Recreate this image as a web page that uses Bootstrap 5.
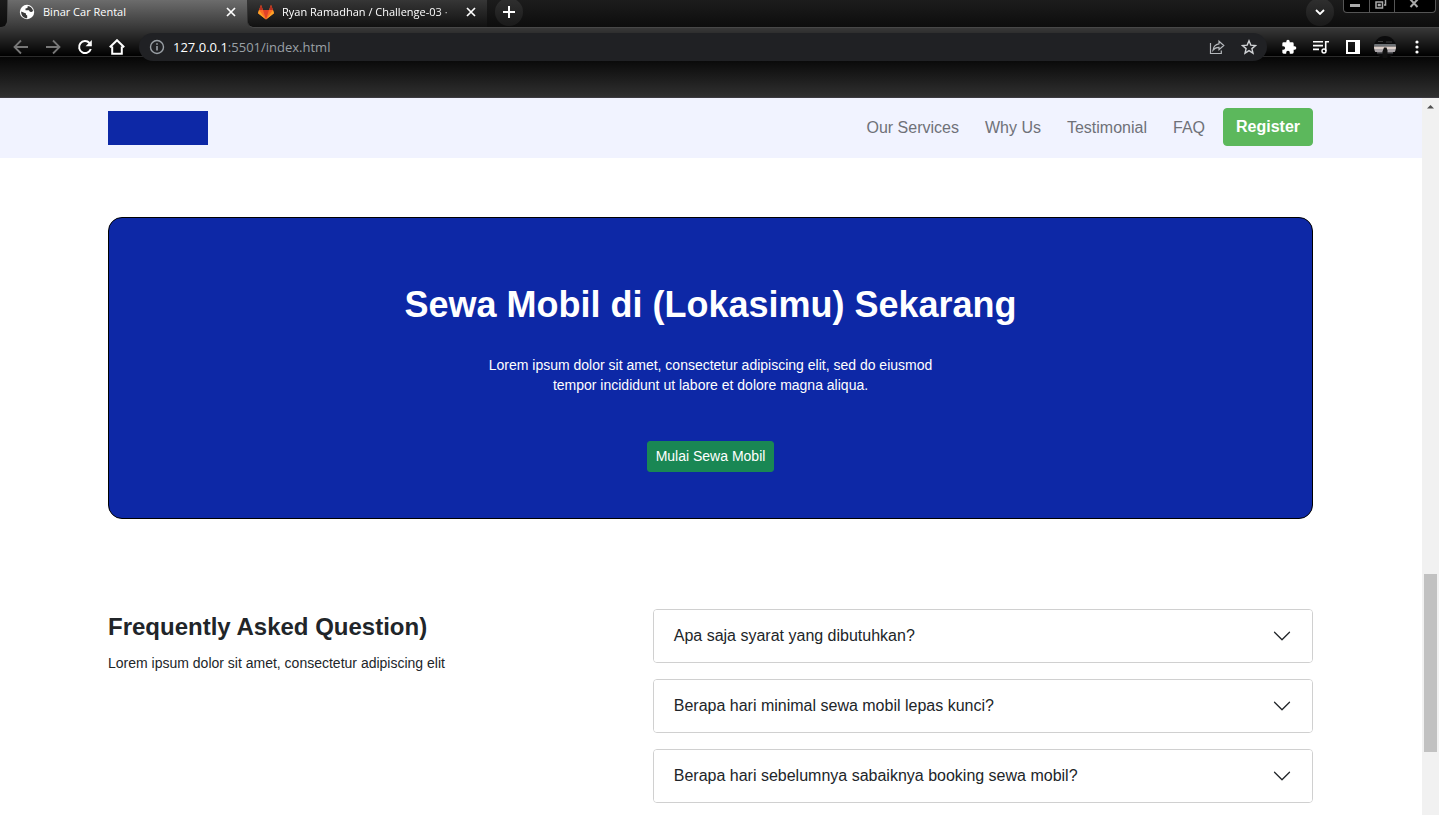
<!DOCTYPE html>
<html lang="id">
<head>
<meta charset="utf-8">
<meta name="viewport" content="width=device-width, initial-scale=1">
<title>Binar Car Rental</title>
<link href="https://cdn.jsdelivr.net/npm/bootstrap@5.3.0/dist/css/bootstrap.min.css" rel="stylesheet">
<style>
  body { font-family: "Liberation Sans", Arial, sans-serif; font-size: 16px; }

  /* Browser window */
  .browser {
    font-family: "Open Sans", "Noto Sans", sans-serif;
    height: 98px; color: #fff;
    background: linear-gradient(#6c6c6c, #383838 28px, #000 56px, #2b2b2b 56px, #2b2b2b 57px, #060606 57px, #303030 97px, #3c3a40 97px);
  }
  .browser button { border: 0; padding: 0; background: none; color: inherit; display: flex; align-items: center; justify-content: center; }
  .browser svg { display: block; flex: none; }
  .tab-strip { height: 28px; }
  .strip-edge { width: 8px; background: linear-gradient(#1c1c1c, #0c0c0c); border-bottom-right-radius: 7px; border-right: 1px solid #454545; border-bottom: 1px solid #3a3a3a; }
  .tab-item { width: 239px; height: 28px; padding: 0 11px 4px; font-size: 11px; }
  .tab-item .tab-label { margin-left: 8px; white-space: nowrap; color: #fff; text-decoration: none; line-height: 16px; }
  .strip-rest { background: linear-gradient(#1c1c1c, #0d0d0d); border-bottom-left-radius: 7px; border-left: 1px solid #333; border-bottom: 1px solid #484848; min-width: 0; }
  .tab-back { background: linear-gradient(#363636, #111); border-bottom-left-radius: 7px; height: 27px; padding-left: 10px; }
  .tab-back .tab-label { -webkit-mask-image: linear-gradient(to right, #000 155px, transparent 186px); mask-image: linear-gradient(to right, #000 155px, transparent 186px); }
  .browser .round-btn { width: 28px; height: 28px; margin-top: -2px; border-radius: 14px; background: linear-gradient(#303030, #1a1a1a); }
  .window-buttons { height: 13px; border: 1px solid #555; border-top: 0; border-radius: 0 0 4px 4px; background: #000; color: #aaa; margin-right: 3px; margin-left: 9px; }
  .window-buttons button { width: 25px; height: 12px; align-items: flex-start; padding-right: 3px; }
  .window-buttons button + button { border-left: 1px solid #555; }
  .window-buttons button:last-child { width: 41px; }
  .toolbar { height: 38px; padding: 0 6px 0 13px; }
  .nav-icons { gap: 16px; margin-right: 14px; }
  .address { height: 28px; border-radius: 14px; background: #202124; padding: 0 10px; min-width: 0; margin-right: 6px; }
  .address input { border: 0; background: none; width: 100%; color: transparent; padding: 0; }
  .address-text { font-size: 13px; line-height: 20px; color: #9aa0a6; margin-left: 8px; white-space: nowrap; }
  .address-text b { font-weight: 400; color: #fff; }
  .tool-icons button { width: 32px; height: 28px; }

  /* Page */
  .site { background: #fff; min-width: 0; overflow: hidden; }
  .site-inner { padding-left: 108px; padding-right: 109px; }
  .site-nav { background: #f1f3ff; height: 60px; }
  .brand-box { width: 100px; height: 34px; background: #0d28a6; }
  .site-nav .nav-link { color: #6f7178; padding: 0 13px; line-height: 24px; }
  .site-nav .btn { --bs-btn-bg: #5cb85c; --bs-btn-border-color: #5cb85c; --bs-btn-color: #fff; --bs-btn-border-radius: 4px; margin-left: 5px; width: 90px; padding: 6px 0; font-weight: 700; margin-bottom: 2px; }
  .banner { background: #0d28a6; border: 1px solid #000; border-radius: 14px; margin-top: 59px; padding: 65px 24px 46px; color: #fff; }
  .banner h1 { font-size: 36px; font-weight: 700; line-height: 44px; margin-bottom: 28px; }
  .banner p, .faq p { font-size: 14px; line-height: 20px; }
  .banner p { max-width: 460px; margin: 0 auto 46px; }
  .banner .btn { --bs-btn-font-size: 14px; --bs-btn-border-radius: 3px; line-height: 21px; }
  .faq { display: grid; grid-template-columns: 11fr 14fr; column-gap: 26px; margin-top: 90px; align-items: start; }
  .faq h2 { font-size: 24px; font-weight: 700; line-height: 28px; margin: 4px 0 12px; }
  .faq .accordion { --bs-accordion-btn-color: #212529; --bs-accordion-border-color: #d0d0d0; --bs-accordion-border-radius: 4px; --bs-accordion-inner-border-radius: 3px; }
  .faq .accordion-item { border: 1px solid #d0d0d0; border-radius: 4px; margin-bottom: 16px; }
  .faq .accordion-item:not(:first-of-type) { border-top: 1px solid #d0d0d0; }
  .faq .accordion-button { line-height: 20px; border-radius: 3px; }

  /* Scroll bar */
  .scroll-track { width: 17px; background: #f1f1f1; padding: 0 2px; flex: none; }
  .scroll-track svg { margin: 6px auto 6px 3px; display: block; }
  .scroll-thumb { background: #c1c1c1; flex: 178 1 0; }
  .scroll-before { flex: 459 1 0; }
  .scroll-after { flex: 63 1 0; }
</style>
</head>
<body class="vh-100 d-flex flex-column overflow-hidden">

<header class="browser flex-shrink-0">
  <div class="tab-strip d-flex">
    <div class="strip-edge"></div>
    <div class="tab-item d-flex align-items-center flex-shrink-0">
      <svg width="16" height="16" viewBox="0 0 16 16"><circle cx="8" cy="8" r="7.2" fill="#fff"/><path d="M2.2 7.4 7 9.6v1.2l1.2.8v2.6C5 14.300 1.800 11.500 2.200 7.400ZM8.800 2l-.4 1.900-1.900.5v1.800h3.400l1 1.500 1.600.3 1.600-1C13.500 4 11.400 2.200 8.800 2Z" fill="#3b3b3b"/></svg>
      <a class="tab-label flex-grow-1" href="#">Binar Car Rental</a>
      <button type="button" aria-label="Close tab"><svg width="10" height="10" viewBox="0 0 10 10"><path d="m1 1 8 8M9 1 1 9" stroke="#fff" stroke-width="1.7"/></svg></button>
    </div>
    <div class="strip-rest d-flex flex-grow-1">
      <div class="tab-item tab-back d-flex align-items-center flex-shrink-0">
        <svg width="16" height="16" viewBox="0 0 16 16"><path d="M3 .8 1 6 0 9.200 8 15.500l8-6.300L15 6 13 .8 11 6H5Z" fill="#fc6d26"/><path d="M5 6h6l-3 9.500Z" fill="#e24329"/><path d="M3 .8 5 6H1ZM13 .8 11 6h4Z" fill="#b93021"/><path d="M1 6 0 9.200l8 6.300ZM15 6l1 3.200-8 6.300Z" fill="#fca326"/></svg>
        <a class="tab-label flex-grow-1" href="#">Ryan Ramadhan / Challenge-03 ·</a>
        <button type="button" aria-label="Close tab"><svg width="10" height="10" viewBox="0 0 10 10"><path d="m1 1 8 8M9 1 1 9" stroke="#fff" stroke-width="1.7"/></svg></button>
      </div>
      <button type="button" class="round-btn ms-2" aria-label="New tab"><svg width="12" height="12" viewBox="0 0 12 12"><path d="M6 0v12M0 6h12" stroke="#fff" stroke-width="2"/></svg></button>
      <button type="button" class="round-btn ms-auto" aria-label="Search tabs"><svg width="10" height="6" viewBox="0 0 10 6"><path d="m1 1 4 4 4-4" fill="none" stroke="#fff" stroke-width="1.800"/></svg></button>
      <div class="window-buttons d-flex">
        <button type="button" aria-label="Minimize"><svg width="12" height="9" viewBox="0 0 12 9"><path d="M1 4h10v3H1z" fill="#aaa"/></svg></button>
        <button type="button" aria-label="Restore"><svg width="12" height="9" viewBox="0 0 12 9"><path d="M1 2h6.500v6H1ZM3.500 4.500h1.500v1H3.500ZM7 0M10.500 0v5H9" fill="none" stroke="#aaa" stroke-width="1.500"/></svg></button>
        <button type="button" aria-label="Close"><svg width="10" height="9" viewBox="0 0 10 9"><path d="m1 -1 7.500 8M9 -1 1.500 7" fill="none" stroke="#aaa" stroke-width="2"/></svg></button>
      </div>
    </div>
  </div>
  <div class="toolbar d-flex align-items-center">
    <div class="nav-icons d-flex">
      <button type="button" aria-label="Back"><svg width="16" height="16" viewBox="0 0 16 16"><path d="M15 8H2M8 1.500 1.500 8 8 14.500" fill="none" stroke="#777" stroke-width="1.800"/></svg></button>
      <button type="button" aria-label="Forward"><svg width="16" height="16" viewBox="0 0 16 16"><path d="M1 8h13M8 1.500 14.500 8 8 14.500" fill="none" stroke="#777" stroke-width="1.800"/></svg></button>
      <button type="button" aria-label="Reload"><svg width="16" height="16" viewBox="0 0 16 16"><path d="M13.800 10A6 6 0 1 1 12.500 4" fill="none" stroke="#fff" stroke-width="2"/><path d="M14.800 1v6.200H8.600Z" fill="#fff"/></svg></button>
      <button type="button" aria-label="Home"><svg width="16" height="16" viewBox="0 0 16 16"><path d="M3.200 7.500v7.300h9.600V7.500M.8 8.200 8 1.200l7.200 7" fill="none" stroke="#fff" stroke-width="2"/></svg></button>
    </div>
    <div class="address d-flex align-items-center flex-grow-1">
      <svg width="16" height="16" viewBox="0 0 16 16"><circle cx="8" cy="8" r="6.500" fill="none" stroke="#9aa0a6" stroke-width="1.400"/><path d="M8 7v4.500M8 4.200v1.600" stroke="#9aa0a6" stroke-width="1.600"/></svg>
      <label class="address-text" for="url"><b>127.0.0.1</b>:5501/index.html</label>
      <input id="url" type="text" class="flex-grow-1">
      <svg width="16" height="16" viewBox="0 0 16 16" fill="none" stroke="#b5b8bc" stroke-width="1.200"><path d="M1.500 4v10.500h10.800v-3M10 2.200l4.800 4.300L10 10.700V8.400c-2.700-.1-4.500.8-6 2.800.4-3.500 2.500-5.900 6-6.400Z"/></svg>
      <svg class="ms-3" width="16" height="16" viewBox="0 0 16 16"><path d="m8 1.800 1.800 4.300 4.700.4-3.600 3.100 1.100 4.600L8 11.700l-4 2.500 1.100-4.600-3.600-3.100 4.700-.4Z" fill="none" stroke="#d0d2d5" stroke-width="1.400"/></svg>
    </div>
    <div class="tool-icons d-flex">
      <button type="button" aria-label="Extensions"><svg width="16" height="16" viewBox="0 0 24 24"><path d="M20.500 11H19V7a2 2 0 0 0-2-2h-4V3.500a2.500 2.500 0 0 0-5 0V5H4a2 2 0 0 0-2 2v3.800h1.500a2.700 2.700 0 0 1 0 5.400H2V20c0 1.100.9 2 2 2h3.800v-1.500a2.700 2.700 0 0 1 5.400 0V22H17a2 2 0 0 0 2-2v-4h1.500a2.500 2.500 0 0 0 0-5Z" fill="#fff"/></svg></button>
      <button type="button" aria-label="Media"><svg width="16" height="16" viewBox="0 0 16 16"><path d="M0 2.800h10M0 6.600h10M0 10.400h6M12.700 12V2.700H16" fill="none" stroke="#fff" stroke-width="1.600"/><circle cx="11" cy="12" r="2" fill="none" stroke="#fff" stroke-width="1.400"/></svg></button>
      <button type="button" aria-label="Side panel"><svg width="14" height="14" viewBox="0 0 14 14"><path d="M1 1h12v12H1z" fill="none" stroke="#fff" stroke-width="2"/><path d="M9 1h4v12H9z" fill="#fff"/></svg></button>
      <button type="button" aria-label="Profile"><svg width="22" height="22" viewBox="0 0 22 22"><defs><clipPath id="avatar"><circle cx="11" cy="11" r="11"/></clipPath></defs><g clip-path="url(#avatar)"><path d="M0 0h22v22H0z" fill="#0b0b0c"/><path d="M0 8h22v2.500H0z" fill="#6d7175"/><path d="M0 10.500h22V13H0z" fill="#dccfc9"/><path d="M0 13h22v3H0z" fill="#aaa5a8"/><path d="M3 16h16v1.500H3z" fill="#57575b"/><path d="M10 11.500h2.500l1 3V22H8.500v-6.500Z" fill="#111"/><path d="M4 5.500h5M12 6h6" stroke="#3a3a3a"/></g></svg></button>
      <button type="button" aria-label="Menu"><svg width="8" height="16" viewBox="0 0 8 16" fill="#fff"><circle cx="4" cy="3" r="1.600"/><circle cx="4" cy="8" r="1.600"/><circle cx="4" cy="13" r="1.600"/></svg></button>
    </div>
  </div>
</header>

<div class="d-flex flex-grow-1 overflow-hidden">
  <div class="site flex-grow-1">
    <nav class="site-nav site-inner d-flex align-items-center justify-content-between">
      <a class="brand-box" href="#" aria-label="Home"></a>
      <div class="d-flex align-items-center">
        <a class="nav-link" href="#">Our Services</a>
        <a class="nav-link" href="#">Why Us</a>
        <a class="nav-link" href="#">Testimonial</a>
        <a class="nav-link" href="#">FAQ</a>
        <button type="button" class="btn">Register</button>
      </div>
    </nav>

    <main class="site-inner">
      <section class="banner text-center">
        <h1>Sewa Mobil di (Lokasimu) Sekarang</h1>
        <p>Lorem ipsum dolor sit amet, consectetur adipiscing elit, sed do eiusmod tempor incididunt ut labore et dolore magna aliqua.</p>
        <button type="button" class="btn btn-success btn-sm">Mulai Sewa Mobil</button>
      </section>

      <section class="faq">
        <div>
          <h2>Frequently Asked Question)</h2>
          <p>Lorem ipsum dolor sit amet, consectetur adipiscing elit</p>
        </div>
        <div class="accordion">
          <div class="accordion-item"><button class="accordion-button collapsed" type="button">Apa saja syarat yang dibutuhkan?</button></div>
          <div class="accordion-item"><button class="accordion-button collapsed" type="button">Berapa hari minimal sewa mobil lepas kunci?</button></div>
          <div class="accordion-item"><button class="accordion-button collapsed" type="button">Berapa hari sebelumnya sabaiknya booking sewa mobil?</button></div>
        </div>
      </section>
    </main>
  </div>
  <div class="scroll-track d-flex flex-column" aria-hidden="true">
    <svg width="7" height="5" viewBox="0 0 7 5"><path d="M0 4.500 3.500 1 7 4.500Z" fill="#505050"/></svg>
    <div class="scroll-before"></div>
    <div class="scroll-thumb"></div>
    <div class="scroll-after"></div>
  </div>
</div>

<script src="https://cdn.jsdelivr.net/npm/bootstrap@5.3.0/dist/js/bootstrap.bundle.min.js"></script>
</body>
</html>
